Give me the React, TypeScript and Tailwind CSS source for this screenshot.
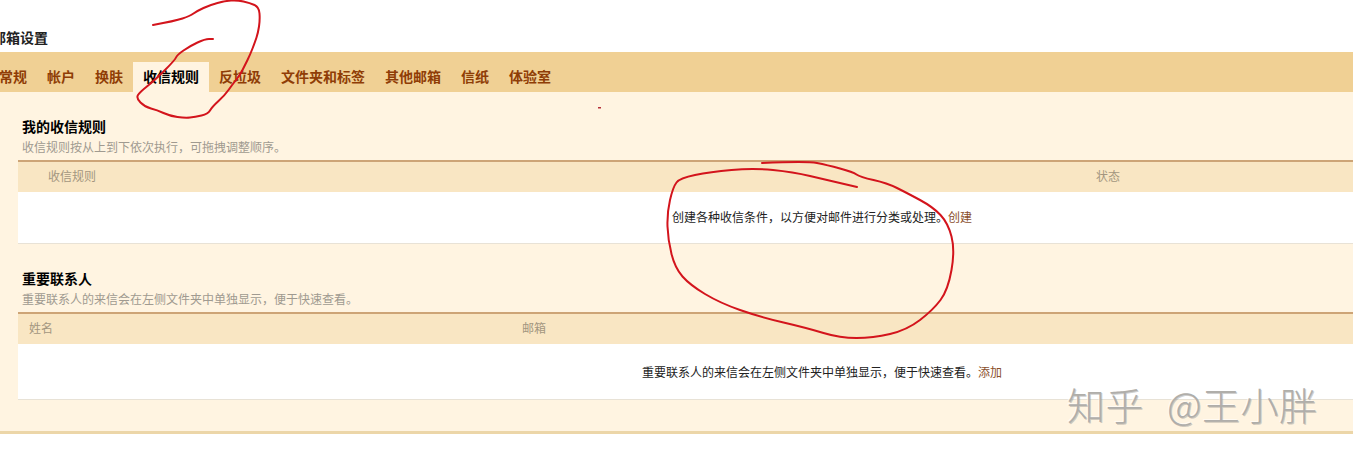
import React from "react";

const tabs = ["常规", "帐户", "换肤", "收信规则", "反垃圾", "文件夹和标签", "其他邮箱", "信纸", "体验室"];

const scribbleTop: number[][] = [
    [153, 25], [175, 21], [190, 16], [197, 11], [210, 5], [225, 1], [237, 0], [250, 3], [259, 7], [260, 20],
    [258, 33], [255, 42], [250, 55], [245, 65], [240, 75], [232, 85], [225, 95], [212, 107], [208, 114],
    [195, 117], [185, 118], [170, 116], [157, 110], [145, 107], [136, 98], [140, 92], [155, 80], [175, 60],
    [177, 55], [190, 46], [205, 39], [213, 39],
];

const scribbleCircle: number[][] = [
    [762, 163], [807, 161], [827, 165], [853, 172], [860, 177], [887, 183], [907, 193], [933, 207], [948, 223],
    [955, 250], [948, 290], [933, 310], [907, 330], [873, 338], [840, 338], [807, 328], [760, 317], [720, 303],
    [690, 285], [675, 268], [668, 240], [667, 213], [673, 187], [680, 178], [710, 172], [753, 168], [793, 172],
    [827, 180], [857, 187],
];

// smooth a hand drawn line through the midpoints
const toPath = (pts: number[][]) => {
    let d = `M${pts[0][0]} ${pts[0][1]}`;
    for (let i = 1; i < pts.length - 1; i++) {
        const mx = (pts[i][0] + pts[i + 1][0]) / 2;
        const my = (pts[i][1] + pts[i + 1][1]) / 2;
        d += ` Q${pts[i][0]} ${pts[i][1]} ${mx} ${my}`;
    }
    const last = pts[pts.length - 1];
    return `${d} L${last[0]} ${last[1]}`;
};

function Section({ title, desc, header, rowClass, text, action }: {
    title: string;
    desc: string;
    header: React.ReactNode;
    rowClass: string;
    text: string;
    action: string;
}) {
    return (
        <section>
            <h2 className="ml-[22px] text-[14px] leading-[20px] font-bold text-black">{title}</h2>
            <p className="ml-[22px] mt-[1px] h-[23px] text-[12px] leading-[20px] text-[#a09a90]">{desc}</p>
            <div className="ml-[18px] w-[1608px]">
                <div className="h-[32px] border-t-2 border-[#cda476] bg-[#f9e6c3] text-[12px] leading-[28px] text-[#a39680]">
                    {header}
                </div>
                <div className={`${rowClass} flex items-center justify-center border-b border-[#e8e2d6] bg-white text-[12px] text-[#222]`}>
                    {text}
                    <a className="text-[#8a4f2c]">{action}</a>
                </div>
            </div>
        </section>
    );
}

export default function App() {
    return (
        <div
            className="relative h-[460px] w-[1353px] overflow-hidden bg-white"
            style={{ fontFamily: '"Noto Sans CJK SC", "Liberation Sans", sans-serif' }}
        >
            <h1 className="-ml-[8px] pt-[27px] h-[52px] text-[14px] leading-[20px] font-bold text-[#222]">邮箱设置</h1>

            <nav className="flex h-[40px] items-end bg-[#f0d094] pl-0">
                <div className="-ml-[11px] flex">
                    {tabs.map((t) => (
                        <div
                            key={t}
                            className={
                                t === "收信规则"
                                    ? "h-[30px] bg-[#fff4e1] px-[10px] text-[14px] leading-[28px] font-bold text-black"
                                    : "h-[30px] px-[10px] text-[14px] leading-[28px] font-bold text-[#8f3d06]"
                            }
                        >
                            {t}
                        </div>
                    ))}
                </div>
            </nav>

            <main className="h-[342px] border-b-[3px] border-[#ecd6a8] bg-[#fff4e1] pt-[24px]">
                <Section
                    title="我的收信规则"
                    desc="收信规则按从上到下依次执行，可拖拽调整顺序。"
                    header={
                        <div className="grid grid-cols-[1048px_1fr] pl-[30px]">
                            <span>收信规则</span>
                            <span>状态</span>
                        </div>
                    }
                    rowClass="h-[52px] pb-[2px]"
                    text="创建各种收信条件，以方便对邮件进行分类或处理。"
                    action="创建"
                />
                <div className="h-[24px]" />
                <Section
                    title="重要联系人"
                    desc="重要联系人的来信会在左侧文件夹中单独显示，便于快速查看。"
                    header={
                        <div className="grid grid-cols-[493px_1fr] pl-[11px]">
                            <span>姓名</span>
                            <span>邮箱</span>
                        </div>
                    }
                    rowClass="h-[56px]"
                    text="重要联系人的来信会在左侧文件夹中单独显示，便于快速查看。"
                    action="添加"
                />
            </main>

            {/* red marker scribbles drawn over the screenshot */}
            <svg className="pointer-events-none absolute inset-0" width="1353" height="460" fill="none">
                <path d={toPath(scribbleTop)} stroke="#d3141c" strokeWidth="2" strokeLinecap="round" strokeLinejoin="round" />
                <path d={toPath(scribbleCircle)} stroke="#d3141c" strokeWidth="2" strokeLinecap="round" strokeLinejoin="round" />
                <rect x="598" y="107" width="3" height="1.5" fill="#b5303a" />
            </svg>

            {/* watermark */}
            <div
                className="absolute left-[1067px] top-[379px] whitespace-nowrap text-[38px] leading-[50px] font-light tracking-[0.5px] [word-spacing:14px] text-[#b0aeaa]"
                style={{ textShadow: "1px 1px 0 rgba(120,120,120,0.35), -1px -1px 0 rgba(255,255,255,0.6)" }}
            >
                知乎 @王小胖
            </div>
        </div>
    );
}
